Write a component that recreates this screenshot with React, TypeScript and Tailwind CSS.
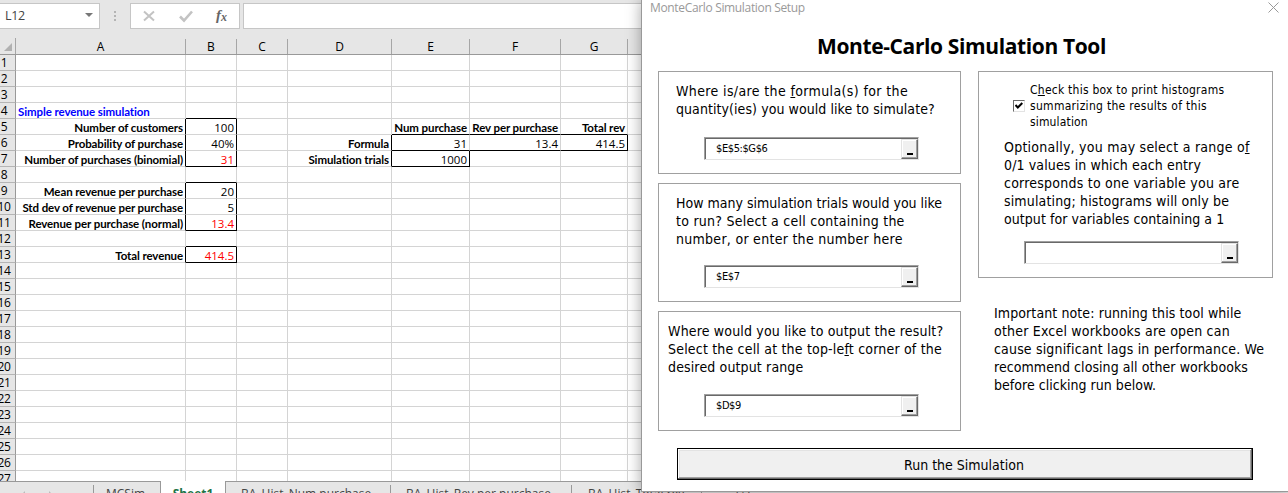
import type { ReactNode } from 'react';

type Cell = { text?: string; className?: string };

const columns = [
  { name: 'A', width: 'w-[170px]' },
  { name: 'B', width: 'w-[51px]' },
  { name: 'C', width: 'w-[51px]' },
  { name: 'D', width: 'w-[104px]' },
  { name: 'E', width: 'w-[78px]' },
  { name: 'F', width: 'w-[91px]' },
  { name: 'G', width: 'w-[67px]' },
  { name: '', width: 'w-[60px]' },
];

const bold = "justify-end font-['Lato',sans-serif] text-[11.5px] font-bold tracking-[-0.1px]";
const num = 'justify-end';
const R = 'border-r-black';
const B = 'border-b-black';

const cells: Record<string, Cell> = {
  A4: { text: 'Simple revenue simulation', className: "font-['Lato',sans-serif] font-bold text-[#0000ff] tracking-[-0.1px]" },
  B4: { className: B },
  A5: { text: 'Number of customers', className: `${bold} ${R}` },
  B5: { text: '100', className: `${num} ${R}` },
  E5: { text: 'Num purchase', className: `${bold} ${B}` },
  F5: { text: 'Rev per purchase', className: `${bold} ${B}` },
  G5: { text: 'Total rev', className: `${bold} ${B}` },
  A6: { text: 'Probability of purchase', className: `${bold} ${R}` },
  B6: { text: '40%', className: `${num} ${R}` },
  D6: { text: 'Formula', className: `${bold} ${R}` },
  E6: { text: '31', className: `${num} ${B}` },
  F6: { text: '13.4', className: `${num} ${B}` },
  G6: { text: '414.5', className: `${num} ${B} ${R}` },
  A7: { text: 'Number of purchases (binomial)', className: `${bold} ${R}` },
  B7: { text: '31', className: `${num} ${R} ${B} text-[#ff0000]` },
  D7: { text: 'Simulation trials', className: `${bold} ${R}` },
  E7: { text: '1000', className: `${num} ${R} ${B}` },
  B8: { className: B },
  A9: { text: 'Mean revenue per purchase', className: `${bold} ${R}` },
  B9: { text: '20', className: `${num} ${R}` },
  A10: { text: 'Std dev of revenue per purchase', className: `${bold} ${R}` },
  B10: { text: '5', className: `${num} ${R}` },
  A11: { text: 'Revenue per purchase (normal)', className: `${bold} ${R}` },
  B11: { text: '13.4', className: `${num} ${R} ${B} text-[#ff0000]` },
  B12: { className: B },
  A13: { text: 'Total revenue', className: `${bold} ${R}` },
  B13: { text: '414.5', className: `${num} ${R} ${B} text-[#ff0000]` },
};

function FormulaBar() {
  return (
    <div className="flex h-[38px] shrink-0 items-start pt-[3px]">
      <div className="flex h-[26px] w-[100px] items-center justify-between border border-l-0 border-[#c6c6c6] bg-white pt-px pl-[5px] pr-[6px] text-[12.5px] text-[#444]">
        <span className="tracking-[-0.3px]">L12</span>
        <svg width="8" height="4" viewBox="0 0 8 4" className="-mt-[3px]"><path d="M0 0h8L4 4z" fill="#777" /></svg>
      </div>
      <svg width="3" height="26" viewBox="0 0 3 26" className="ml-[14px] mr-[13px]">
        <path d="M0 8h2v2H0zM0 12h2v2H0zM0 16h2v2H0z" fill="#b4b4b4" />
      </svg>
      <div className="flex h-[26px] w-[110px] items-center border border-[#c6c6c6] bg-white">
        <svg width="108" height="24" viewBox="0 0 108 24" fill="none">
          <path d="M13 7.5l10 9M23 7.5l-10 9" stroke="#c3c3c3" strokeWidth="2" />
          <path d="M49 12.5l4 4 8-9" stroke="#c3c3c3" strokeWidth="2.6" />
          <text x="85" y="16" className="fill-[#666] font-[Liberation_Serif] text-[15px] font-bold italic">f</text>
          <text x="90" y="17" className="fill-[#666] font-[Liberation_Serif] text-[12px] font-bold italic">x</text>
        </svg>
      </div>
      <div className="ml-[3px] h-[26px] grow border border-[#c6c6c6] bg-white" />
    </div>
  );
}

function Sheet() {
  const rows = Array.from({ length: 27 }, (_, i) => i + 1);
  return (
    <div className="h-[443px] shrink-0 overflow-hidden bg-white text-[11.5px] leading-[15px] text-black">
      <div className="flex h-[17px] border-b border-[#999] bg-[#e6e6e6]">
        <div className="flex w-4 shrink-0 items-end justify-end border-r border-[#a6a6a6] pb-[3px] pr-[3px]">
          <svg width="8" height="8" viewBox="0 0 8 8"><path d="M8 0v8H0z" fill="#b1b1b1" /></svg>
        </div>
        {columns.map((c) => (
          <div key={c.name} className={`${c.width} mt-px shrink-0 border-r border-[#a6a6a6] text-center text-[12px]`}>{c.name}</div>
        ))}
      </div>
      {rows.map((r) => (
        <div key={r} className="flex h-4">
          <div className="flex w-4 shrink-0 justify-center border-r border-b border-[#999] border-b-[#b5b5b5] bg-[#e6e6e6] pr-[7px] text-[12px] leading-4 tracking-[-0.3px]">{r}</div>
          {columns.map((c) => {
            const cell = cells[`${c.name}${r}`];
            return (
              <div key={c.name} className={`${c.width} flex shrink-0 whitespace-nowrap border-r border-b border-[#d4d4d4] px-[2px] pt-px ${cell?.className ?? ''}`}>
                {cell?.text}
              </div>
            );
          })}
        </div>
      ))}
    </div>
  );
}

function SheetTabs() {
  const tab = 'h-3 shrink-0 overflow-hidden whitespace-nowrap border-t border-[#999] pt-[3px] text-[12px] text-[#444] leading-[17px]';
  return (
    <div className="flex h-3 shrink-0 overflow-hidden bg-[#e6e6e6]">
      <div className={`${tab} flex w-[94px] justify-end`}>
        <svg width="30" height="8" viewBox="0 0 30 8" className="mr-[41px]"><path d="M1 8l2-2v2zM29 8l-2-2v2z" fill="#bbb" /></svg>
        <i className="h-2 w-px bg-[#999]" />
      </div>
      <div className={`${tab} w-[67px] border-r pl-3`}>MCSim</div>
      <div className="h-3 w-16 shrink-0 overflow-hidden bg-white pt-1 text-center text-[12px] font-bold leading-[17px] text-[#217346]">Sheet1</div>
      <div className={`${tab} flex w-[166px] justify-between border-l pl-[15px]`}>BA_Hist_Num purchase<i className="h-2 w-px bg-[#999]" /></div>
      <div className={`${tab} flex w-[181px] justify-between pl-[15px]`}>BA_Hist_Rev per purchase<i className="h-2 w-px bg-[#999]" /></div>
      <div className={`${tab} flex w-[130px] justify-between pl-4`}>BA_Hist_Total rev<i className="h-2 w-px bg-[#999]" /></div>
      <div className={`${tab} grow pl-[34px]`}>(+)</div>
    </div>
  );
}

function RefInput({ value, className = '' }: { value: string; className?: string }) {
  return (
    <div className={`flex h-[23px] w-[215px] border border-t-[#a0a0a0] border-r-[#e3e3e3] border-b-[#e3e3e3] border-l-[#a0a0a0] bg-white ${className}`}>
      <div className="flex grow border-t border-l border-[#696969]">
        <span className="grow pl-[10px] text-[11px] leading-[19px] tracking-[-0.4px]">{value}</span>
        <button className="flex w-[17px] items-end justify-center border border-t-[#e3e3e3] border-r-[#696969] border-b-[#696969] border-l-[#e3e3e3] bg-[#f0f0f0] pb-[3px] shadow-[inset_-1px_-1px_#a0a0a0,inset_1px_1px_#fff]">
          <i className="h-[2px] w-[6px] bg-black" />
        </button>
      </div>
    </div>
  );
}

function Panel({ children, className = '' }: { children: ReactNode; className?: string }) {
  return <section className={`border border-[#a0a0a0] ${className}`}>{children}</section>;
}

function Line({ children, className = '' }: { children: ReactNode; className?: string }) {
  return <span className={`block ${className}`}>{children}</span>;
}

function Dialog() {
  return (
    <div className="absolute top-0 left-[641px] flex h-[492px] w-[647px] flex-col border-b border-l border-[#999] bg-white font-['DejaVu_Sans_Condensed','DejaVu_Sans',sans-serif] text-[14px] leading-[18px] font-normal whitespace-nowrap text-black shadow-[0_0_14px_rgba(0,0,0,0.35)] [font-stretch:condensed]">
      <div className="flex h-[16px] shrink-0 justify-between pl-2 pr-[9px] font-['Open_Sans',sans-serif] text-[12px] leading-[16px] tracking-[-0.34px] text-[#999] [font-stretch:normal]">
        <span>MonteCarlo Simulation Setup</span>
        <svg width="11" height="11" viewBox="0 0 11 11" className="mt-[2px]"><path d="M.5.5l10 10M10.5.5l-10 10" stroke="#999" /></svg>
      </div>
      <h1 className="h-[55px] shrink-0 pt-[15px] pl-[175px] font-['Open_Sans',sans-serif] text-[21px] leading-[30px] font-bold tracking-[-0.38px] [font-stretch:normal]">Monte-Carlo Simulation Tool</h1>
      <div className="flex h-[360px] shrink-0 gap-[17px] pl-4">
        <div className="flex w-[303px] flex-col">
          <Panel className="h-[103px] pt-[10px] pl-[17px]">
            <p>
              <Line className="tracking-[0.37px]">Where is/are the <u>f</u>ormula(s) for the</Line>
              <Line className="tracking-[0.07px]">quantity(ies) you would like to simulate?</Line>
            </p>
            <RefInput value="$E$5:$G$6" className="mt-[19px] ml-7" />
          </Panel>
          <Panel className="mt-[9px] h-[119px] pt-[10px] pl-[17px]">
            <p>
              <Line>How many simulation trials would you like</Line>
              <Line className="tracking-[0.25px]">to run? Select a cell containing the</Line>
              <Line className="tracking-[0.28px]">number, or enter the number here</Line>
            </p>
            <RefInput value="$E$7" className="mt-[17px] ml-7" />
          </Panel>
          <Panel className="mt-[9px] h-[120px] pt-[10px] pl-[9px]">
            <p>
              <Line className="tracking-[0.17px]">Where would you like to output the result?</Line>
              <Line className="tracking-[0.19px]">Select the cell at the top-le<u>f</u>t corner of the</Line>
              <Line className="tracking-[0.14px]">desired output range</Line>
            </p>
            <RefInput value="$D$9" className="mt-[18px] ml-9" />
          </Panel>
        </div>
        <div className="flex w-[295px] flex-col">
          <Panel className="h-[207px] pt-[10px] pl-[25px]">
            <label className="flex items-center gap-[5px] pl-[9px] text-[12px] leading-4">
              <span className="flex size-3 items-center justify-center border border-t-[#696969] border-r-[#e3e3e3] border-b-[#e3e3e3] border-l-[#696969]">
                <svg width="8" height="8" viewBox="0 0 8 8"><path d="M.5 3l2.3 2.5L7.3 1" fill="none" stroke="#000" strokeWidth="2" /></svg>
              </span>
              <span>
                <Line className="tracking-[0.24px]">C<u>h</u>eck this box to print histograms</Line>
                <Line className="tracking-[0.3px]">summarizing the results of this</Line>
                <Line className="tracking-[0.15px]">simulation</Line>
              </span>
            </label>
            <p className="mt-[8px]">
              <Line className="tracking-[0.24px]">Optionally, you may select a range o<u>f</u></Line>
              <Line className="tracking-[0.13px]">0/1 values in which each entry</Line>
              <Line className="tracking-[0.23px]">corresponds to one variable you are</Line>
              <Line className="tracking-[0.15px]">simulating; histograms will only be</Line>
              <Line className="tracking-[0.06px]">output for variables containing a 1</Line>
            </p>
            <RefInput value="" className="mt-[13px] ml-5" />
          </Panel>
          <p className="mt-[26px] pl-4">
            <Line className="tracking-[0.1px]">Important note: running this tool while</Line>
            <Line className="tracking-[0.2px]">other Excel workbooks are open can</Line>
            <Line className="tracking-[0.17px]">cause significant lags in performance. We</Line>
            <Line className="tracking-[0.06px]">recommend closing all other workbooks</Line>
            <Line className="tracking-[0.03px]">before clicking run below.</Line>
          </p>
        </div>
      </div>
      <button className="mt-[17px] ml-[35px] h-8 w-[576px] shrink-0 border border-black bg-[#f0f0f0] pt-px pr-[2px] shadow-[inset_-1px_-1px_#696969,inset_1px_1px_#fff,inset_-2px_-2px_#a0a0a0,inset_2px_2px_#e3e3e3]">Run the Simulation</button>
    </div>
  );
}

export default function App() {
  return (
    <main className="relative flex h-[493px] w-[1288px] flex-col overflow-hidden bg-[#e6e6e6] font-['Open_Sans',sans-serif]">
      <FormulaBar />
      <Sheet />
      <SheetTabs />
      <Dialog />
    </main>
  );
}
